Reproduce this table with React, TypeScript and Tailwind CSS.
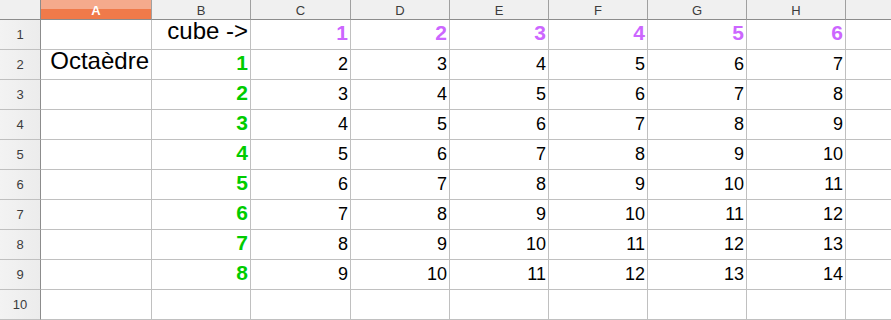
import React from "react";

const cols = [
  { name: "A", w: "w-[111px]" },
  { name: "B", w: "w-[99px]" },
  { name: "C", w: "w-[100px]" },
  { name: "D", w: "w-[99px]" },
  { name: "E", w: "w-[99px]" },
  { name: "F", w: "w-[99px]" },
  { name: "G", w: "w-[99px]" },
  { name: "H", w: "w-[99px]" },
];

type Cell = { v: string; kind?: "text" | "num" | "green" | "purple" };

function buildRows(): Cell[][] {
  const rows: Cell[][] = [];
  rows.push([
    { v: "" },
    { v: "cube ->", kind: "text" },
    ...[1, 2, 3, 4, 5, 6].map((n) => ({ v: String(n), kind: "purple" as const })),
  ]);
  for (let i = 1; i <= 8; i++) {
    rows.push([
      i === 1 ? { v: "Octaèdre", kind: "text" } : { v: "" },
      { v: String(i), kind: "green" },
      ...[1, 2, 3, 4, 5, 6].map((c) => ({ v: String(i + c), kind: "num" as const })),
    ]);
  }
  rows.push(Array.from({ length: 8 }, () => ({ v: "" })));
  return rows;
}

const kindClass: Record<string, string> = {
  text: "text-[24px] text-black pb-0",
  num: "text-[18px] text-black pb-[1px]",
  green: "text-[21px] font-bold text-[#00cc00] pb-[1px]",
  purple: "text-[21px] font-bold text-[#cc66ff] pb-[1px]",
};

export default function App() {
  const rows = buildRows();
  return (
    <div className="w-[891px] h-[320px] overflow-hidden bg-white font-['Liberation_Sans',Arial,sans-serif]">
      {/* column headers */}
      <div className="flex h-[20px]">
        <div className="w-[41px] shrink-0 bg-[#f0f0f0] border-r border-b border-[#8c8c8c]" />
        {cols.map((c, i) => (
          <div
            key={c.name}
            className={`${c.w} shrink-0 flex items-center justify-center border-r border-b text-[13px] leading-none pt-[1px] ${
              i === 0
                ? "bg-[linear-gradient(to_bottom,#f5aa8c_0%,#f5aa8c_48%,#f07a4a_48%,#f07a4a_100%)] text-white font-bold border-r-[#a0a0a0] border-b-[#8c8c8c]"
                : "bg-[#f0f0f0] text-[#3c3c3c] border-r-[#a0a0a0] border-b-[#8c8c8c]"
            }`}
          >
            {c.name}
          </div>
        ))}
        <div className="flex-1 bg-[#f0f0f0] border-b border-[#8c8c8c]" />
      </div>

      {rows.map((row, r) => (
        <div key={r} className="flex h-[30px]">
          <div className="w-[41px] shrink-0 flex items-center justify-center bg-[linear-gradient(to_right,#f3f3f3,#ececec)] border-r border-r-[#8c8c8c] border-b border-b-[#c0c0c0] text-[13px] text-[#3c3c3c] pt-[1px]">
            {r + 1}
          </div>
          {row.map((cell, c) => (
            <div
              key={c}
              className={`${cols[c].w} shrink-0 flex items-end justify-end pr-[2px] border-r border-b border-[#c0c0c0] whitespace-nowrap leading-normal ${
                cell.kind ? kindClass[cell.kind] : ""
              }`}
            >
              {cell.v}
            </div>
          ))}
          <div className="flex-1 border-b border-[#c0c0c0]" />
        </div>
      ))}
    </div>
  );
}
